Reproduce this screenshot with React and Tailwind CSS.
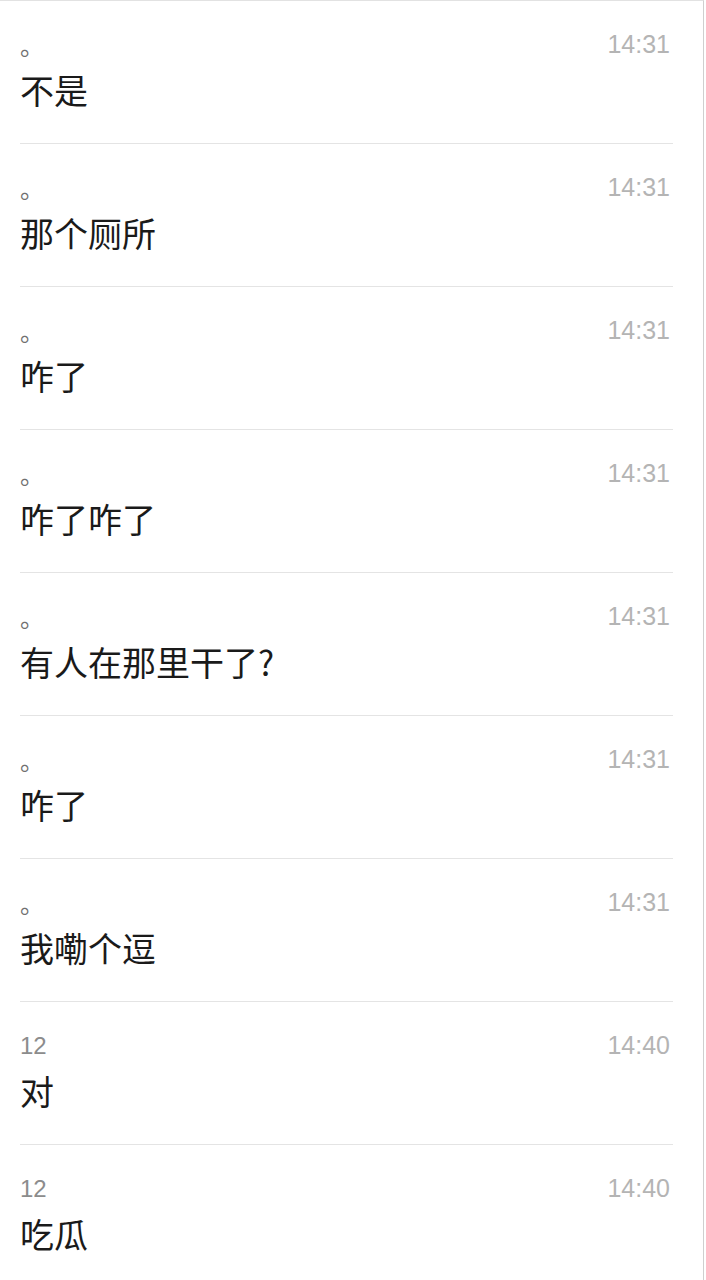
const rows = [
  { name: "。", text: "不是", time: "14:31" },
  { name: "。", text: "那个厕所", time: "14:31" },
  { name: "。", text: "咋了", time: "14:31" },
  { name: "。", text: "咋了咋了", time: "14:31" },
  { name: "。", text: "有人在那里干了?", time: "14:31" },
  { name: "。", text: "咋了", time: "14:31" },
  { name: "。", text: "我嘞个逗", time: "14:31" },
  { name: "12", text: "对", time: "14:40" },
  { name: "12", text: "吃瓜", time: "14:40" },
];

export default function App() {
  return (
    <div className="w-[706px] h-[1280px] overflow-hidden bg-white">
      <div className="w-[704px] min-h-[1280px] border-t border-r border-t-[#e2e2e2] border-r-[#cfcfcf] bg-white">
        {rows.map((r, i) => (
          <div
            key={i}
            className="ml-[20px] w-[653px] h-[143px] border-b border-[#e4e4e4] pr-[3px] pt-[28px]"
          >
            <div className="flex items-baseline justify-between h-[30px]">
              <span
                className={
                  r.name === "。"
                    ? "relative top-[2px] text-[24px] leading-[30px] text-[#707070]"
                    : "text-[24px] leading-[30px] text-[#8c8c8c]"
                }
                style={{ fontFamily: '"Liberation Sans", "Noto Sans CJK SC", sans-serif' }}
              >
                {r.name}
              </span>
              <span
                className="text-[25px] leading-[30px] text-[#b4b4b4]"
                style={{ fontFamily: '"Liberation Sans", Arial, sans-serif' }}
              >
                {r.time}
              </span>
            </div>
            <div
              className="mt-[11px] text-[34px] leading-[40px] text-[#1a1a1a]"
              style={{ fontFamily: '"Noto Sans CJK SC", sans-serif' }}
            >
              {r.text}
            </div>
          </div>
        ))}
      </div>
    </div>
  );
}
